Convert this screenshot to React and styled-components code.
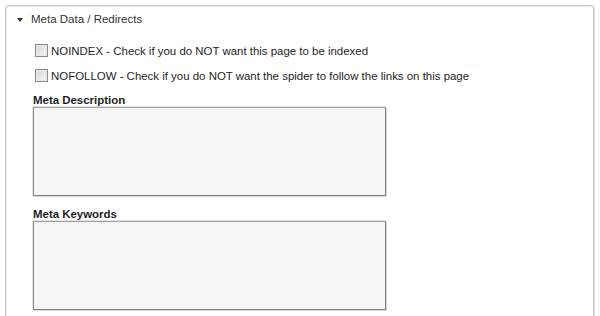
import React from "react";
import styled, { createGlobalStyle } from "styled-components";

const Global = createGlobalStyle`
  html, body { margin: 0; padding: 0; background: #fff; }
  body { font-family: Arial, "Liberation Sans", sans-serif; font-size: 11.45px; color: #1e1e1e; }
`;

const Panel = styled.section`
  margin: 5px 0 0 5px;
  width: 589px;
  height: 330px;
  border: 1px solid #c6c6c6;
  box-shadow: inset 1px 1px 0 #ececec, 1px 0 0 #e2e2e2;
  border-radius: 4px;
  box-sizing: border-box;
`;

const Header = styled.div`
  display: flex;
  align-items: center;
  height: 26px;
  padding: 0 0 0 11px;
  color: #333;
  font-size: 11.5px;
`;

const Caret = styled.span`
  width: 0;
  height: 0;
  border-left: 3px solid transparent;
  border-right: 3px solid transparent;
  border-top: 4px solid #333;
  margin-right: 8px;
  margin-top: 1px;
`;

const Body = styled.div`
  display: flex;
  flex-direction: column;
  padding: 6px 0 0 27px;
`;

const CheckRow = styled.label`
  display: flex;
  align-items: center;
  height: 25px;
  padding-left: 2px;
  color: #1e1e1e;
`;

const Box = styled.span`
  width: 11px;
  height: 11px;
  border: 1px solid #8a8a8a;
  background: linear-gradient(135deg, #d8d8d8, #f4f4f4);
  box-shadow: inset 0 0 0 1px #e8e8e8;
  margin-right: 3px;
  flex: none;
`;

const FieldLabel = styled.div`
  font-weight: bold;
  color: #1e1e1e;
  margin-top: ${(p) => p.$top}px;
  line-height: 14px;
  height: 14px;
`;

const Area = styled.textarea`
  display: block;
  width: 353px;
  height: 89px;
  box-sizing: border-box;
  margin: 0;
  border: 1px solid #7d7d7d;
  border-top-color: #a0a0a0;
  border-left-color: #8a8a8a;
  box-shadow: 1px 1px 0 #d8d8d8, -1px -1px 0 #e4e4e4;
  background: #f6f6f6;
  resize: none;
  padding: 3px;
  font-family: Arial, "Liberation Sans", sans-serif;
  font-size: 12px;
`;

export default function App() {
  return (
    <>
      <Global />
      <Panel>
        <Header>
          <Caret />
          Meta Data / Redirects
        </Header>
        <Body>
          <CheckRow>
            <Box />
            NOINDEX - Check if you do NOT want this page to be indexed
          </CheckRow>
          <CheckRow>
            <Box />
            NOFOLLOW - Check if you do NOT want the spider to follow the links on this page
          </CheckRow>
          <FieldLabel $top={5}>Meta Description</FieldLabel>
          <Area />
          <FieldLabel $top={11}>Meta Keywords</FieldLabel>
          <Area />
        </Body>
      </Panel>
    </>
  );
}
